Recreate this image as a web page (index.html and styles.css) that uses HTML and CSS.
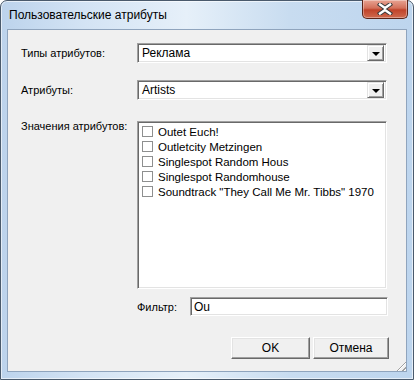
FILE: index.html
```html
<!DOCTYPE html>
<html lang="ru">

<head>
  <meta charset="UTF-8">
  <meta name="viewport" content="width=device-width, initial-scale=1.0">
  <title>Пользовательские атрибуты</title>
  <link rel="stylesheet" href="styles.css">
</head>

<body>
  <div class="window">
    <div class="titlebar">
      <span class="title">Пользовательские атрибуты</span>
      <button class="close-btn" title="Закрыть">
        <svg width="16" height="12" viewBox="0 0 16 12">
          <path d="M3 1.5 L8 5 L13 1.5 M3 10.5 L8 7 L13 10.5" stroke="#3b3b3b" stroke-width="4.4" fill="none" stroke-linecap="square"/>
          <path d="M3 1.5 L8 5 L13 1.5 M3 10.5 L8 7 L13 10.5" stroke="#fff" stroke-width="2.4" fill="none" stroke-linecap="square"/>
        </svg>
      </button>
    </div>

    <div class="client">
      <div class="form">
        <label class="lbl">Типы атрибутов:</label>
        <div class="combo">
          <span class="combo-text">Реклама</span>
          <span class="drop"><i class="arrow"></i></span>
        </div>

        <label class="lbl">Атрибуты:</label>
        <div class="combo">
          <span class="combo-text">Artists</span>
          <span class="drop"><i class="arrow"></i></span>
        </div>

        <label class="lbl lbl-top">Значения атрибутов:</label>
        <div class="listbox">
          <div class="item"><span class="check"></span>Outet Euch!</div>
          <div class="item"><span class="check"></span>Outletcity Metzingen</div>
          <div class="item"><span class="check"></span>Singlespot Random Hous</div>
          <div class="item"><span class="check"></span>Singlespot Randomhouse</div>
          <div class="item"><span class="check"></span>Soundtrack "They Call Me Mr. Tibbs" 1970</div>
        </div>

        <div></div>
        <div class="filter-row">
          <label class="filter-lbl">Фильтр:</label>
          <div class="textbox">Ou</div>
        </div>
      </div>

      <div class="buttons">
        <button class="btn">OK</button>
        <button class="btn">Отмена</button>
      </div>

      <div class="grip"></div>
    </div>
  </div>
</body>

</html>
```

FILE: styles.css
```css
body {
  margin: 0;
  padding: 0;
  background-color: #ffffff;
  font-family: "Liberation Sans", Arial, sans-serif;
  font-size: 11px;
  color: #000;
}

.window {
  width: 414px;
  height: 380px;
  box-sizing: border-box;
  border: 1px solid #4a5a6c;
  border-radius: 7px 7px 0 0;
  background: linear-gradient(90deg, #bcd3ec 0%, #d3e3f4 20%, #e6f0f9 45%, #c8dcf0 70%, #bdd5ee 100%);
  padding: 0 6px 7px 6px;
  display: flex;
  flex-direction: column;
  box-shadow: inset 0 0 0 1px rgba(255, 255, 255, 0.6);
}

.titlebar {
  height: 28px;
  display: flex;
  align-items: flex-start;
  justify-content: space-between;
}

.title {
  font-family: "Liberation Sans", Arial, sans-serif;
  font-size: 12px;
  color: #000;
  margin-top: 7px;
  margin-left: 2px;
}

.close-btn {
  width: 46px;
  height: 19px;
  margin-top: -1px;
  margin-right: -1px;
  padding: 0;
  border: 1px solid #5a2418;
  border-top: none;
  border-radius: 0 0 5px 5px;
  background: linear-gradient(180deg, #e8a493 0%, #d3705a 45%, #c0432a 55%, #cf6a4e 100%);
  display: flex;
  align-items: center;
  justify-content: center;
  box-shadow: inset 0 0 0 1px rgba(255, 255, 255, 0.35);
}

.client {
  flex: 1;
  background-color: #f0f0f0;
  border: 1px solid #8fa4bd;
  position: relative;
  padding: 13px 18px 0 13px;
}

.form {
  display: grid;
  grid-template-columns: 116px 250px;
  row-gap: 17px;
}

.lbl {
  align-self: center;
}

.lbl-top {
  align-self: start;
  padding-top: 3px;
}

.combo {
  height: 20px;
  box-sizing: border-box;
  background: #fff;
  border-top: 1px solid #a0a0a0;
  border-left: 1px solid #a0a0a0;
  border-right: 1px solid #fff;
  border-bottom: 1px solid #fff;
  box-shadow: inset 1px 1px 0 #696969, inset -1px -1px 0 #e3e3e3;
  display: flex;
  align-items: center;
  padding: 2px 2px 2px 4px;
}

.combo-text {
  flex: 1;
  font-size: 12px;
}

.drop {
  width: 17px;
  height: 16px;
  box-sizing: border-box;
  background: #f0f0f0;
  border-top: 1px solid #e3e3e3;
  border-left: 1px solid #e3e3e3;
  border-right: 1px solid #696969;
  border-bottom: 1px solid #696969;
  box-shadow: inset 1px 1px 0 #fff, inset -1px -1px 0 #a0a0a0;
  display: flex;
  align-items: center;
  justify-content: center;
}

.arrow {
  width: 0;
  height: 0;
  border-left: 4px solid transparent;
  border-right: 4px solid transparent;
  border-top: 4px solid #000;
  margin-top: 1px;
}

.listbox {
  height: 168px;
  box-sizing: border-box;
  background: #fff;
  border-top: 1px solid #a0a0a0;
  border-left: 1px solid #a0a0a0;
  border-right: 1px solid #fff;
  border-bottom: 1px solid #fff;
  box-shadow: inset 1px 1px 0 #696969, inset -1px -1px 0 #e3e3e3;
  margin-top: 4px;
  padding: 2px 0 0 4px;
}

.item {
  height: 15px;
  display: flex;
  align-items: center;
  font-size: 11.5px;
}

.check {
  width: 11px;
  height: 11px;
  box-sizing: border-box;
  border: 1px solid #8e8f8f;
  background: #fff;
  margin-right: 5px;
}

.filter-row {
  display: flex;
  align-items: center;
  margin-top: -9px;
}

.filter-lbl {
  width: 53px;
  font-size: 11px;
}

.textbox {
  flex: 1;
  height: 19px;
  box-sizing: border-box;
  background: #fff;
  border-top: 1px solid #a0a0a0;
  border-left: 1px solid #a0a0a0;
  border-right: 1px solid #fff;
  border-bottom: 1px solid #fff;
  box-shadow: inset 1px 1px 0 #696969, inset -1px -1px 0 #e3e3e3;
  padding: 2px 3px;
  font-size: 12px;
  margin-right: -1px;
}

.buttons {
  display: flex;
  justify-content: flex-end;
  gap: 3px;
  margin-top: 21px;
  margin-right: -1px;
}

.btn {
  width: 79px;
  height: 22px;
  font-family: "Liberation Sans", Arial, sans-serif;
  font-size: 12px;
  color: #000;
  background: #f0f0f0;
  border-top: 1px solid #fff;
  border-left: 1px solid #fff;
  border-right: 1px solid #696969;
  border-bottom: 1px solid #696969;
  box-shadow: inset -1px -1px 0 #a0a0a0, inset 1px 1px 0 #e3e3e3;
  padding: 0;
}

.btn + .btn {
  width: 76px;
}

.grip {
  position: absolute;
  right: 0;
  bottom: 0;
  width: 12px;
  height: 12px;
  background: repeating-linear-gradient(135deg, transparent 0 2px, #a0a0a0 2px 3px, #fff 3px 4px);
  clip-path: polygon(100% 0, 100% 100%, 0 100%);
}
```
